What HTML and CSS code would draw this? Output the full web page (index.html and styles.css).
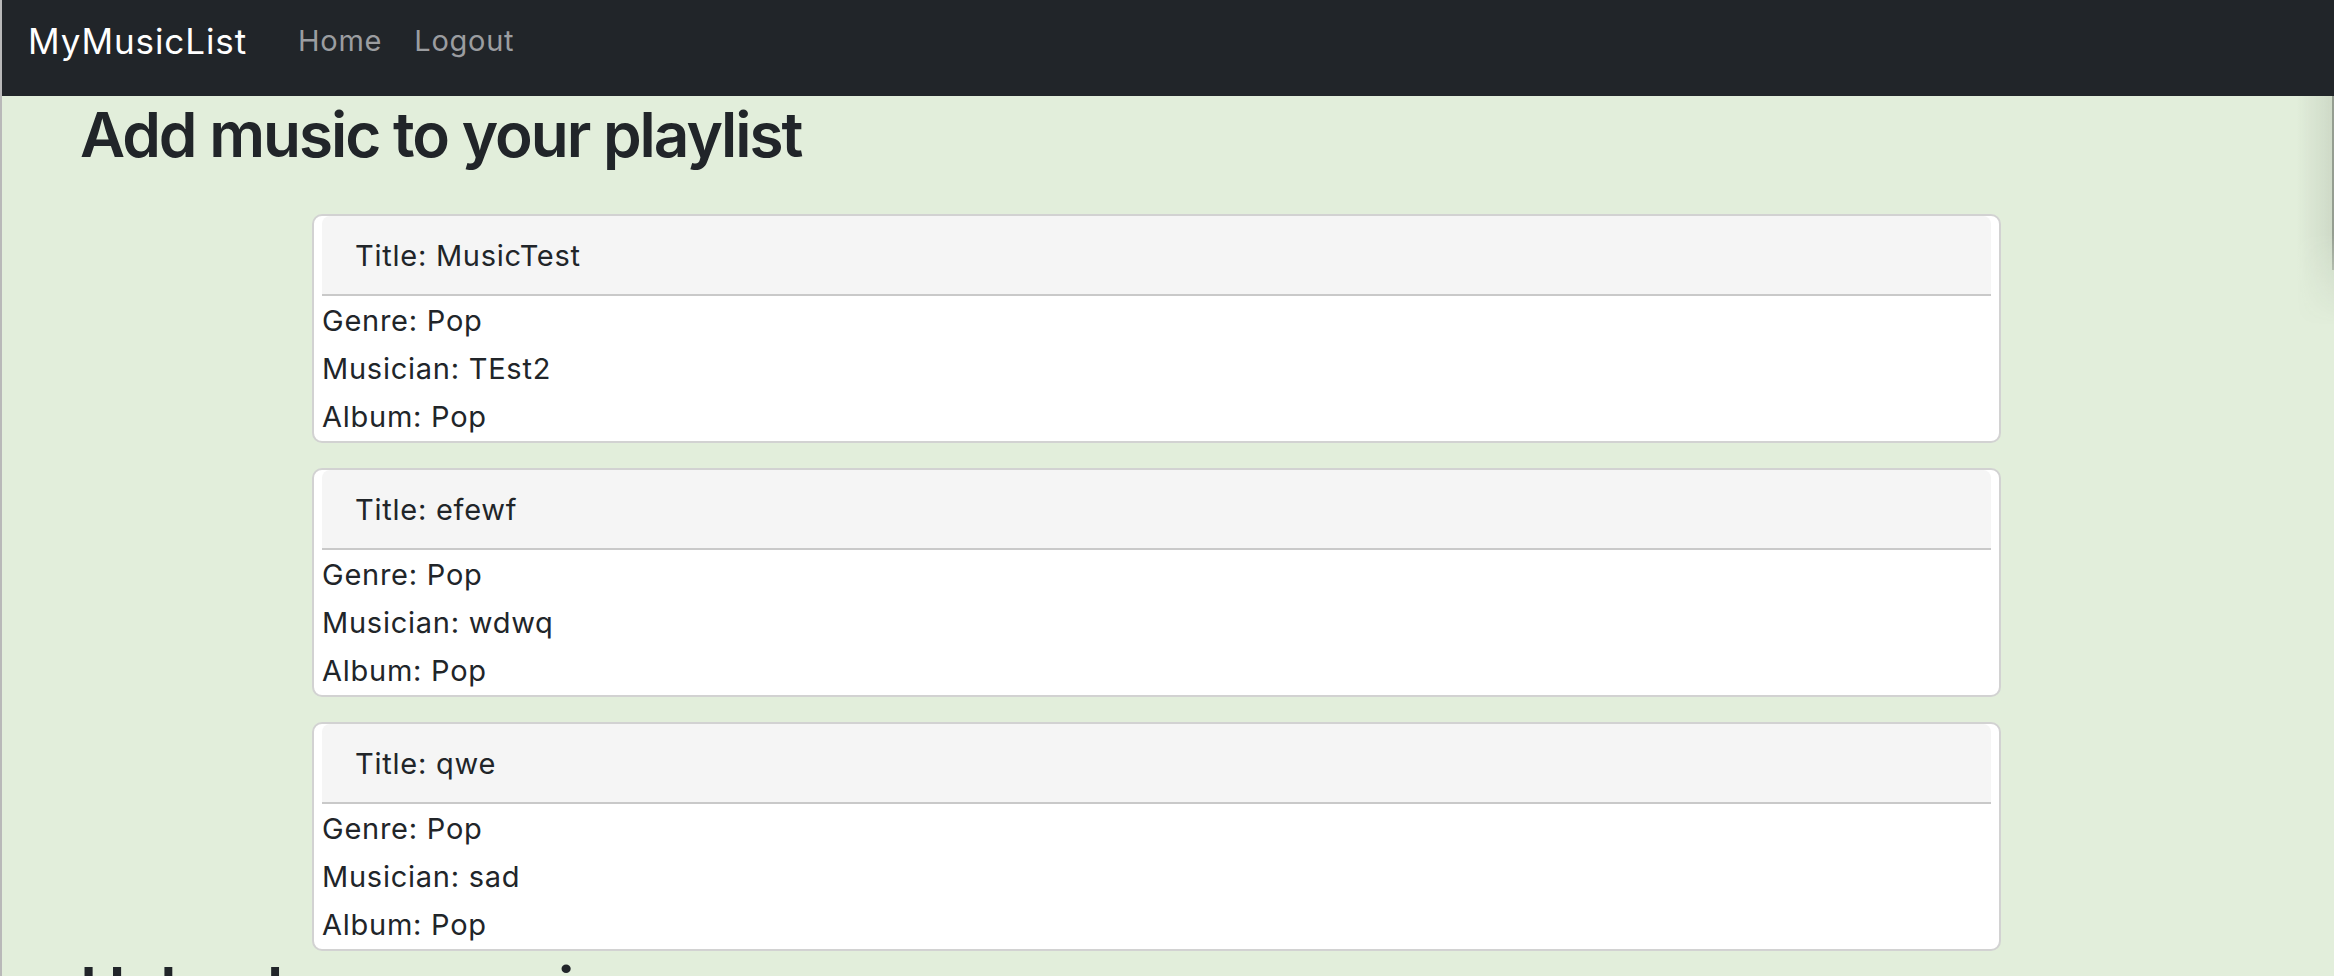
FILE: index.html
```html
<!DOCTYPE html>
<html lang="en">
<head>
<meta charset="utf-8">
<title>MyMusicList</title>
<link rel="stylesheet" href="styles.css">
</head>
<body>
<nav class="navbar">
  <a class="brand" href="#">MyMusicList</a>
  <ul class="nav-links">
    <li><a href="#">Home</a></li>
    <li><a href="#">Logout</a></li>
  </ul>
</nav>
<main class="page">
  <h1 class="page-title">Add music to your playlist</h1>
  <section class="playlist">
    <article class="song-card">
      <header class="song-title">Title: MusicTest</header>
      <div class="song-body">
        <p>Genre: Pop</p>
        <p>Musician: TEst2</p>
        <p>Album: Pop</p>
      </div>
    </article>
    <article class="song-card">
      <header class="song-title">Title: efewf</header>
      <div class="song-body">
        <p>Genre: Pop</p>
        <p>Musician: wdwq</p>
        <p>Album: Pop</p>
      </div>
    </article>
    <article class="song-card">
      <header class="song-title">Title: qwe</header>
      <div class="song-body">
        <p>Genre: Pop</p>
        <p>Musician: sad</p>
        <p>Album: Pop</p>
      </div>
    </article>
  </section>
  <h1 class="page-title upload-title">Upload your music</h1>
</main>
<div class="scroll-shade"></div>
</body>
</html>
```

FILE: styles.css
```css
html, body {
  margin: 0;
  padding: 0;
}

body {
  border-left: 2px solid #b9b9b9;
  background: #e2eedb;
  font-family: Inter, "Noto Sans", "Liberation Sans", sans-serif;
  color: #212529;
  min-height: 100vh;
  overflow: hidden;
}

.navbar {
  display: flex;
  align-items: flex-start;
  height: 96px;
  box-sizing: border-box;
  padding: 21px 0 0 26px;
  background: #212529;
}

.brand {
  font-size: 35px;
  letter-spacing: 0.9px;
  line-height: 40px;
  color: #ffffff;
  text-decoration: none;
}

.nav-links {
  display: flex;
  gap: 32px;
  list-style: none;
  margin: 0 0 0 51px;
  padding: 0;
}

.nav-links a {
  font-size: 29px;
  letter-spacing: 0.75px;
  line-height: 40px;
  color: #9b9da0;
  text-decoration: none;
}

.page {
  padding-left: 78px;
}

.page-title {
  font-size: 62px;
  font-weight: 560;
  letter-spacing: -2px;
  line-height: 74px;
  margin: 2px 0 42px;
}

.upload-title {
  margin-top: 2px;
}

.playlist {
  display: flex;
  flex-direction: column;
  gap: 25px;
  margin-left: 232px;
  width: 1689px;
}

.song-card {
  background: #ffffff;
  border: 2px solid #d2d2d2;
  border-radius: 10px;
  padding: 0 8px;
}

.song-title {
  background: #f5f5f5;
  border-bottom: 2px solid #c9c9c9;
  border-radius: 8px 8px 0 0;
  padding: 16px 33px 14px;
  font-size: 29px;
  letter-spacing: 0.75px;
  line-height: 48px;
}

.song-body {
  padding-top: 1px;
}

.song-body p {
  margin: 0;
  font-size: 29px;
  letter-spacing: 0.75px;
  line-height: 48px;
}

.scroll-shade {
  position: fixed;
  top: 96px;
  right: 0;
  width: 38px;
  height: 230px;
  background: linear-gradient(to right, rgba(60, 70, 55, 0), rgba(60, 70, 55, 0.12));
  -webkit-mask-image: linear-gradient(to bottom, #000 60%, transparent);
  mask-image: linear-gradient(to bottom, #000 60%, transparent);
}

.scroll-shade::after {
  content: "";
  position: absolute;
  top: 0;
  right: 0;
  width: 2px;
  height: 174px;
  background: rgba(80, 85, 80, 0.45);
}
```
